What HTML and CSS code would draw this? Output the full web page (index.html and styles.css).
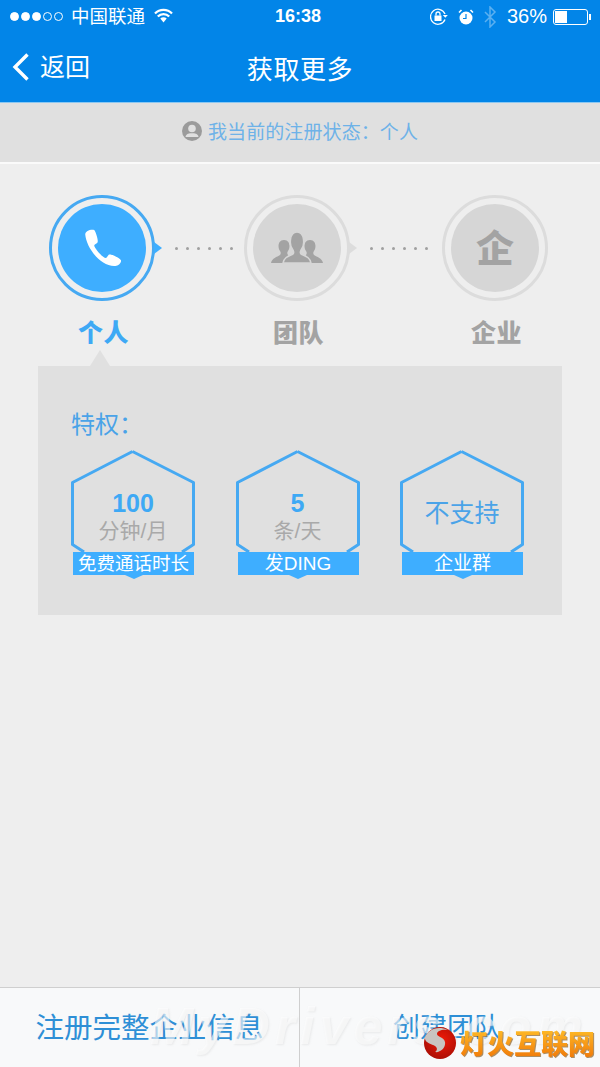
FILE: index.html
```html
<!DOCTYPE html>
<html lang="zh-CN">
<head>
    <meta charset="UTF-8">
    <meta name="viewport" content="width=device-width, initial-scale=1.0">
    <title>获取更多</title>
    <link rel="stylesheet" href="styles.css">
</head>
<body>
    <div class="page">
        <header class="top">
            <div class="statusbar">
                <div class="status_left">
                    <div class="signal">
                        <i class="on"></i><i class="on"></i><i class="on"></i><i></i><i></i>
                    </div>
                    <span class="carrier">中国联通</span>
                    <svg class="wifi" width="19" height="15" viewBox="0 0 19 15">
                        <path d="M1 5.500a12 12 0 0 1 17 0M3.800 8.500a8 8 0 0 1 11.400 0" fill="none" stroke="#fff" stroke-width="2.300"/>
                        <path d="M6.300 10.600a4.500 4.500 0 0 1 6.400 0L9.500 14.500z" fill="#fff"/>
                    </svg>
                </div>
                <span class="time">16:38</span>
                <div class="status_right">
                    <svg class="lock" width="18" height="17" viewBox="0 0 18 17">
                        <path d="M15 6A7.500 7.500 0 1 0 15 11.500" fill="none" stroke="#fff" stroke-width="1.300"/>
                        <path d="M12.800 7h5l-2.500 2.800z" fill="#fff"/>
                        <rect x="4.500" y="7.500" width="7" height="5.500" fill="#fff"/>
                        <path d="M6 7.500V6a2 2 0 0 1 4 0v1.500" fill="none" stroke="#fff" stroke-width="1.300"/>
                    </svg>
                    <svg class="alarm" width="16" height="16" viewBox="0 0 16 16">
                        <circle cx="8" cy="9" r="6.500" fill="#fff"/>
                        <path d="M8 5v4.500H5" fill="none" stroke="#0285e8" stroke-width="1.200"/>
                        <path d="M1 3.500L3.500 1M15 3.500L12.500 1" stroke="#fff" stroke-width="1.600"/>
                    </svg>
                    <svg class="bt" width="13" height="22" viewBox="0 0 13 22">
                        <path d="M1 6l10 10-5 5V1l5 5L1 16" fill="none" stroke="#5cb0f0" stroke-width="1.500"/>
                    </svg>
                    <span class="percent">36%</span>
                    <div class="battery"><div class="battery_fill"></div></div>
                </div>
            </div>
            <nav class="navbar">
                <div class="back">
                    <svg width="18" height="30" viewBox="0 0 18 30">
                        <path d="M15.500 2.500L3 15l12.500 12.500" fill="none" stroke="#fff" stroke-width="3.400"/>
                    </svg>
                    <span>返回</span>
                </div>
                <div class="title">获取更多</div>
            </nav>
        </header>

        <div class="state">
            <svg width="20" height="20" viewBox="0 0 20 20">
                <circle cx="10" cy="10" r="10" fill="#9b9b9b"/>
                <circle cx="10" cy="7.500" r="3.800" fill="#e0e0e0"/>
                <path d="M3.500 16c.5-3.500 4-3.700 6.500-3.700s6 .2 6.500 3.700z" fill="#e0e0e0"/>
            </svg>
            <span>我当前的注册状态：个人</span>
        </div>

        <main class="content">
            <div class="steps">
                <div class="step active">
                    <div class="ring">
                        <div class="disc">
                            <svg width="38" height="38" viewBox="0 0 34 34">
                                <path d="M2 5c0-3 5-5 8-4 1 .5 4 9 3 11-.5 1-3 1.500-3 3 1 3 7 10 10 11 1.500 0 2-2 3-3 2-1 10 3 11 5 .5 2-2 5-5 5C16 34 3 17 2 5z" fill="#fff"/>
                            </svg>
                        </div>
                    </div>
                    <div class="step_name">个人</div>
                </div>
                <div class="dots"><i></i><i></i><i></i><i></i><i></i><i></i></div>
                <div class="step">
                    <div class="ring">
                        <div class="disc">
                            <svg width="52" height="34" viewBox="0 0 52 34">
                                <path d="M0 32c1-5 6-6 9-8 1-1 1-3 0-4-2-2-3-11 4-11s6 9 4 11c-1 1-1 3 0 4l4 8z" fill="#a3a3a3"/>
                                <path d="M52 32c-1-5-6-6-9-8-1-1-1-3 0-4 2-2 3-11-4-11s-6 9-4 11c1 1 1 3 0 4l-4 8z" fill="#a3a3a3"/>
                                <path class="group_mid" d="M12 32c1-6 6-7 10-9 1-1 1-2 0-4-4-4-4-18 4-18s8 14 4 18c-1 2-1 3 0 4 4 2 9 3 10 9z"/>
                            </svg>
                        </div>
                    </div>
                    <div class="step_name">团队</div>
                </div>
                <div class="dots wide"><i></i><i></i><i></i><i></i><i></i><i></i></div>
                <div class="step last">
                    <div class="ring">
                        <div class="disc"><span class="disc_char">企</span></div>
                    </div>
                    <div class="step_name">企业</div>
                </div>
            </div>

            <section class="panel">
                <h2 class="panel_title">特权：</h2>
                <div class="badges">
                    <div class="badge">
                        <svg class="hex" width="124" height="104" viewBox="0 0 124 104">
                            <path d="M61.500 1.500L1.500 32.500V94.500L13 102M61.500 1.500L122.500 32.500V94.500L111 102" fill="none" stroke="#46a9f2" stroke-width="3" stroke-linejoin="round"/>
                        </svg>
                        <div class="badge_body">
                            <div class="num">100</div>
                            <div class="unit">分钟/月</div>
                        </div>
                        <div class="ribbon tight">免费通话时长</div>
                    </div>
                    <div class="badge">
                        <svg class="hex" width="124" height="104" viewBox="0 0 124 104">
                            <path d="M61.500 1.500L1.500 32.500V94.500L13 102M61.500 1.500L122.500 32.500V94.500L111 102" fill="none" stroke="#46a9f2" stroke-width="3" stroke-linejoin="round"/>
                        </svg>
                        <div class="badge_body">
                            <div class="num">5</div>
                            <div class="unit">条/天</div>
                        </div>
                        <div class="ribbon">发DING</div>
                    </div>
                    <div class="badge">
                        <svg class="hex" width="124" height="104" viewBox="0 0 124 104">
                            <path d="M61.500 1.500L1.500 32.500V94.500L13 102M61.500 1.500L122.500 32.500V94.500L111 102" fill="none" stroke="#46a9f2" stroke-width="3" stroke-linejoin="round"/>
                        </svg>
                        <div class="badge_body">
                            <div class="nosupport">不支持</div>
                        </div>
                        <div class="ribbon">企业群</div>
                    </div>
                </div>
            </section>
        </main>

        <footer class="bottom">
            <div class="bottom_btn">注册完整企业信息</div>
            <div class="bottom_btn">创建团队</div>
        </footer>

        <!-- watermarks on top of the screenshot -->
        <div class="mark_mydrivers">MyDrivers.com</div>
        <div class="mark_logo">
            <svg width="32" height="32" viewBox="0 0 32 32">
                <defs>
                    <radialGradient id="ball" cx="0.55" cy="0.4" r="0.7">
                        <stop offset="0" stop-color="#f01a08"/>
                        <stop offset="1" stop-color="#a30d05"/>
                    </radialGradient>
                </defs>
                <circle cx="16" cy="16" r="16" fill="url(#ball)"/>
                <path d="M1 10C4 3 13-2 24 3c-6-1-11 1-11 4 0 3 7 3 8 8 1 6-5 11-10 10 2-1 3-4 0-6-3-2-11-3-10-9z" fill="#c9c4c0"/>
            </svg>
            <span class="mark_text">灯火互联网</span>
        </div>
    </div>
</body>
</html>
```

FILE: styles.css
```css
* {
    box-sizing: border-box;
}
body {
    margin: 0;
    background-color: #eeeeee;
    font-family: "Liberation Sans", "Noto Sans CJK SC", sans-serif;
}
.page {
    position: relative;
    width: 600px;
    height: 1067px;
    display: flex;
    flex-direction: column;
    overflow: hidden;
}

/* top bar */
.top {
    height: 103px;
    background-color: #0285e8;
    border-bottom: 1px solid #8cc8f2;
    color: white;
}
.statusbar {
    height: 33px;
    padding: 0 10px;
    display: flex;
    align-items: center;
    justify-content: space-between;
    position: relative;
    font-size: 18px;
}
.status_left,
.status_right {
    display: flex;
    align-items: center;
}
.signal {
    display: flex;
    gap: 2px;
}
.signal i {
    width: 9px;
    height: 9px;
    border: 1px solid white;
    border-radius: 50%;
}
.signal i.on {
    background-color: white;
}
.carrier {
    margin-left: 8px;
    margin-bottom: 4px;
    font-size: 18.500px;
}
.wifi {
    margin-left: 9px;
    margin-bottom: 2px;
}
.time {
    position: absolute;
    left: 275px;
    font-weight: 700;
    font-size: 18px;
}
.lock {
    margin-right: 10px;
}
.alarm {
    margin-right: 10px;
}
.bt {
    margin-right: 10px;
}
.percent {
    font-size: 20px;
    margin-right: 6px;
}
.battery {
    position: relative;
    width: 35px;
    height: 16px;
    border: 1px solid white;
    border-radius: 3px;
    padding: 1px;
    margin-right: 2px;
}
.battery::after {
    content: "";
    position: absolute;
    right: -4px;
    top: 4px;
    width: 2px;
    height: 6px;
    background-color: white;
}
.battery_fill {
    width: 12px;
    height: 100%;
    background-color: white;
}
.navbar {
    height: 69px;
    position: relative;
    display: flex;
    align-items: center;
    justify-content: center;
}
.back {
    position: absolute;
    left: 12px;
    top: 19px;
    display: flex;
    align-items: center;
    gap: 10px;
    font-size: 25px;
    line-height: 30px;
}
.back svg {
    display: block;
}
.title {
    font-size: 26px;
    letter-spacing: .6px;
}

/* register state strip */
.state {
    height: 61px;
    background-color: #e0e0e0;
    border-bottom: 2px solid #fafafa;
    display: flex;
    align-items: center;
    justify-content: center;
    gap: 6px;
    padding-bottom: 4px;
    font-size: 19px;
    letter-spacing: .1px;
    color: #6eb2e8;
}

.content {
    flex: 1;
    padding: 31px 38px 0;
}

/* steps */
.steps {
    display: flex;
    align-items: flex-start;
    padding-left: 11px;
}
.step {
    width: 106px;
    display: flex;
    flex-direction: column;
    align-items: center;
}
.ring {
    position: relative;
    width: 106px;
    height: 106px;
    border: 3px solid #dcdcdc;
    border-radius: 50%;
    display: flex;
    align-items: center;
    justify-content: center;
}
.ring::after {
    content: "";
    position: absolute;
    right: -10px;
    top: 44px;
    border-left: 8px solid #dcdcdc;
    border-top: 6px solid transparent;
    border-bottom: 6px solid transparent;
}
.step.last .ring::after {
    display: none;
}
.disc {
    width: 88px;
    height: 88px;
    border-radius: 50%;
    background-color: #d6d6d6;
    display: flex;
    align-items: center;
    justify-content: center;
}
.group_mid {
    fill: #a3a3a3;
    stroke: #d6d6d6;
    stroke-width: 1.500;
}
.disc_char {
    margin-bottom: 4px;
    font-family: "Noto Sans CJK SC", sans-serif;
    font-weight: 900;
    font-size: 38px;
    line-height: 1;
    color: #a3a3a3;
}
.step.active .ring {
    border-color: #46a9f2;
}
.step.active .ring::after {
    border-left-color: #3eaeff;
}
.step.active .disc {
    background-color: #3eaeff;
}
.step_name {
    margin-top: 14px;
    margin-left: 3px;
    font-family: "Noto Sans CJK SC", sans-serif;
    font-weight: 900;
    font-size: 25px;
    letter-spacing: .5px;
    line-height: 32px;
    color: #a3a3a3;
}
.step.active .step_name {
    color: #3ea9f5;
}
.dots {
    flex: 0 0 89px;
    height: 106px;
    padding-left: 8px;
    display: flex;
    align-items: center;
    justify-content: center;
    gap: 8px;
}
.dots.wide {
    flex-basis: 92px;
    padding-left: 6px;
}
.dots i {
    width: 3px;
    height: 3px;
    border-radius: 50%;
    background-color: #a0a0a0;
}

/* privileges panel */
.panel {
    position: relative;
    margin-top: 19px;
    height: 249px;
    background-color: #e0e0e0;
    padding: 43px 33px 0;
}
.panel::before {
    content: "";
    position: absolute;
    left: 52px;
    top: -16px;
    border-bottom: 16px solid #e0e0e0;
    border-left: 10px solid transparent;
    border-right: 10px solid transparent;
}
.panel_title {
    margin: 0;
    font-weight: 400;
    font-size: 24px;
    line-height: 32px;
    color: #4aa3e8;
}
.badges {
    display: flex;
    gap: 40.500px;
    margin-top: 9px;
}
.badge {
    position: relative;
    width: 124px;
}
.hex {
    position: absolute;
    left: 0;
    top: 0;
}
.badge_body {
    height: 102px;
    padding-top: 40px;
    text-align: center;
}
.num {
    font-weight: 700;
    font-size: 25px;
    line-height: 27px;
    color: #3ea9f5;
}
.unit {
    font-size: 21px;
    line-height: 27px;
    color: #a9a9a9;
}
.nosupport {
    padding-top: 8px;
    font-size: 25px;
    line-height: 30px;
    color: #4aa3e8;
}
.ribbon {
    position: relative;
    height: 23px;
    margin: 0 1px 0 2px;
    background-color: #3eaeff;
    color: white;
    font-size: 19px;
    line-height: 23px;
    text-align: center;
    white-space: nowrap;
}
.ribbon.tight {
    font-size: 18.500px;
}
.ribbon::after {
    content: "";
    position: absolute;
    left: 50%;
    margin-left: -9px;
    top: 23px;
    border-top: 4px solid #3eaeff;
    border-left: 9px solid transparent;
    border-right: 9px solid transparent;
}

/* bottom buttons */
.bottom {
    height: 80px;
    display: flex;
    background-color: #f8f9fa;
    border-top: 1px solid #cfcfcf;
}
.bottom_btn {
    flex: 0 0 300px;
    display: flex;
    align-items: center;
    justify-content: center;
    padding-bottom: 5px;
    font-size: 28.500px;
    color: #2e8fd6;
}
.bottom_btn:first-child {
    border-right: 1px solid #cfcfcf;
}
.bottom_btn:last-child {
    padding-right: 6px;
    font-size: 27px;
}

/* watermarks */
.mark_mydrivers {
    position: absolute;
    left: 150px;
    top: 996px;
    font-weight: 700;
    font-style: italic;
    font-size: 52px;
    letter-spacing: 5px;
    color: rgba(255, 255, 255, .55);
    white-space: nowrap;
    text-shadow: 1px 1px 2px rgba(190, 190, 190, .25);
}
.mark_logo {
    position: absolute;
    left: 424px;
    top: 1027px;
    display: flex;
    align-items: center;
    gap: 4px;
}
.mark_logo svg {
    display: block;
}
.mark_text {
    font-family: "Noto Sans CJK SC", sans-serif;
    font-weight: 900;
    font-size: 27px;
    line-height: 32px;
    background-image: linear-gradient(to bottom, #ffc02a, #f07808);
    -webkit-background-clip: text;
    background-clip: text;
    color: transparent;
    filter: drop-shadow(1px 1px 0 rgba(120, 70, 0, .6));
}
```
